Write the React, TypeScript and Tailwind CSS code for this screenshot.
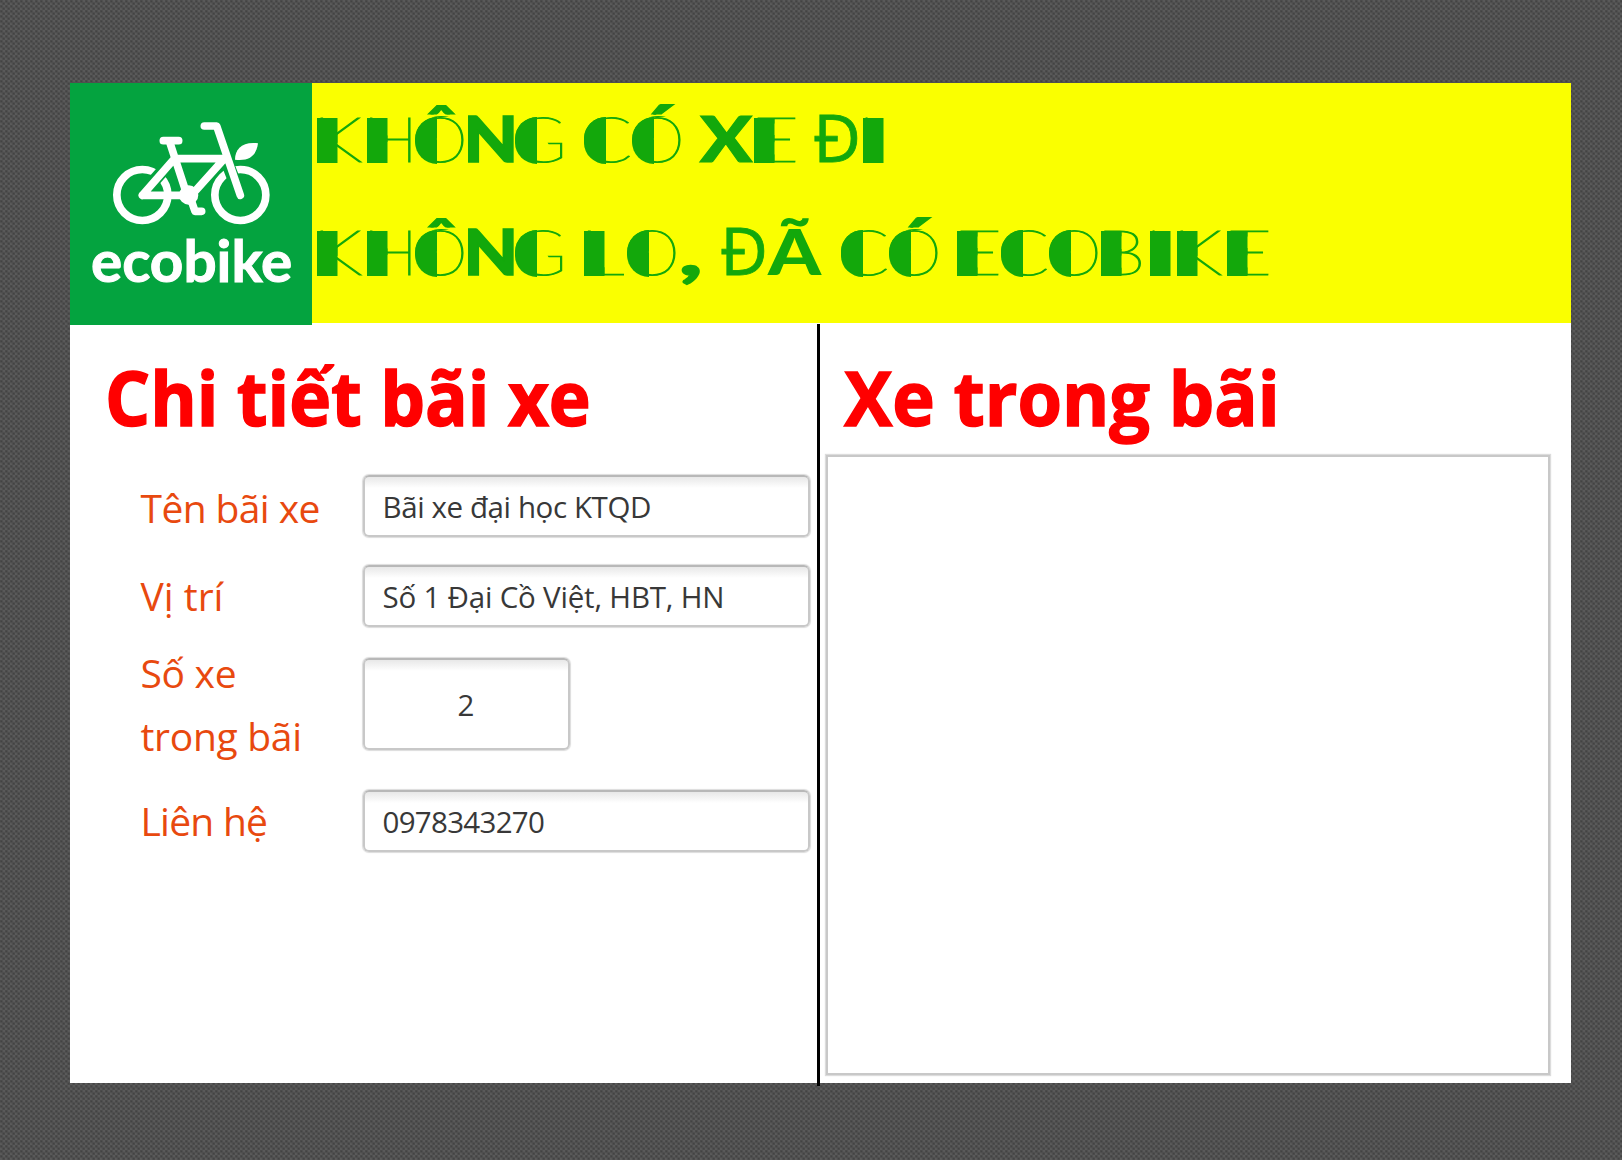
import React from "react";

const layer =
  "before:absolute before:left-0 before:top-0 before:h-[75px] before:font-black before:content-[attr(data-c)]";
const accent =
  " after:absolute after:left-0 after:top-[1px] after:h-[75px] after:w-full after:font-black after:content-[attr(data-c)] after:[clip-path:inset(-12px_0_60px_0)]";
const bar =
  layer +
  " indent-[-4px] origin-left scale-x-[var(--s)] [-webkit-text-stroke:1.2px_#13a80b] before:w-[calc(20.5px/var(--s))] before:[-webkit-text-stroke:34px_#13a80b] before:[clip-path:inset(17px_0_13px_0)]";
const half =
  layer +
  " indent-[-2px] origin-left scale-x-[var(--s)] [-webkit-text-stroke:1.2px_#13a80b] before:w-[calc(22px/var(--s))] before:[-webkit-text-stroke:36px_#13a80b] before:[clip-path:inset(16px_0_12px_0_round_20px_0_0_20px_/_23px_0_0_23px)]";

const styles: Record<string, string> = {
  K: "w-[50px] [--s:1.33] " + bar,
  H: "w-[48px] [--s:1.22] " + bar,
  E: "w-[44px] [--s:1.42] " + bar,
  L: "w-[43px] [--s:1.5] " + bar,
  B: "w-[49px] [--s:1.3] " + bar,
  I: "w-[27px] [--s:1] " + bar,
  O: "w-[52px] [--s:1.13] " + half,
  C: "w-[48px] [--s:1.2] " + half,
  G: "w-[50px] [--s:1.18] " + half,
  "Ô": "w-[52px] [--s:1.13] " + half + accent,
  "Ó": "w-[49px] [--s:1.13] " + half + accent,
  N: "w-[48px] font-black indent-[-3px] origin-left scale-x-[1.14] [-webkit-text-stroke:1.5px_#13a80b]",
  X: "w-[54px] font-black origin-left scale-x-[1.24] [-webkit-text-stroke:1px_#13a80b]",
  "Ã": "w-[54px] -ml-[2px] font-black origin-left scale-x-[1.22]",
  "Đ": "w-[50px] -ml-[4px] top-[-2px] font-['Open_Sans'] text-[66px] font-medium [-webkit-text-stroke:0.8px_#13a80b]",
  ",": "w-[26px] font-black origin-left scale-x-[1.6] [-webkit-text-stroke:1.5px_#13a80b]",
  " ": "w-[19px]",
};

function Slogan({ text }: { text: string }) {
  return (
    <div className="flex h-[75px] whitespace-pre text-[62px] leading-[75px] font-thin">
      {Array.from(text).map((c, i) => (
        <span key={i} data-c={c} className={"relative block h-[75px] shrink-0 " + styles[c]}>
          {c}
        </span>
      ))}
    </div>
  );
}

function Logo() {
  return (
    <svg viewBox="32 38 726 726" className="h-[242px] w-[242px] shrink-0 bg-[#04a33f]">
      <g fill="none" stroke="#fff" strokeWidth="23" strokeLinecap="round" strokeLinejoin="round">
        <circle cx="249" cy="374" r="76.5" />
        <circle cx="543" cy="374" r="76.5" />
        <path d="M285 330L345 262M498 262L530 345" stroke="#04a33f" strokeWidth="38" strokeLinecap="butt" />
        <path d="M249 375H388M249 375L345 265H495L396 375M331 215L380 365M312 211H358M435 167H472L543 375M395 388L407 423H427" />
      </g>
      <circle cx="388" cy="374" r="29" fill="#fff" />
      <path d="M527 268C527 236 549 213 596 219C591 256 570 273 527 268Z" fill="#fff" />
      <text x="95" y="634" textLength="604" lengthAdjust="spacingAndGlyphs" fill="#fff" stroke="#fff" strokeWidth="3" className="font-['Lato'] text-[172px] font-bold">
        ecobike
      </text>
    </svg>
  );
}

const field =
  "flex items-center rounded-[6px] border-2 border-[#c8c8c8] border-t-[#b8b8b8] shadow-[0_0_1px_1px_#dcdcdc] bg-linear-to-b from-[#e8e8e8] to-white to-[11px] pt-[2px] text-[29.5px] text-[#383838]";
const wide = " h-[62px] w-[447px] pl-[18px]";
const label = "w-[222px] shrink-0 text-[39px] text-[#e8490f]";

export default function App() {
  return (
    <div className="h-[1160px] w-[1622px] overflow-hidden bg-[#5a5a5a] bg-[radial-gradient(circle_at_25%_25%,#404040_0,transparent_45%),radial-gradient(circle_at_75%_75%,#404040_0,transparent_45%)] bg-[length:5px_5px] pt-[83px] pl-[70px] font-['Open_Sans','Noto_Sans',sans-serif]">
      <div className="flex h-[1000px] w-[1501px] flex-col bg-white">
        <header className="flex h-[240px] shrink-0 bg-[#faff00]">
          <Logo />
          <div className="flex flex-col gap-[38px] pt-[18px] pl-[5px] font-['Lato'] text-[#13a80b]">
            <Slogan text="KHÔNG CÓ XE ĐI" />
            <Slogan text="KHÔNG LO, ĐÃ CÓ ECOBIKE" />
          </div>
        </header>
        <div className="flex h-[763px] shrink-0 pt-px">
          <section className="flex w-[747px] flex-col pt-[18px]">
            <h1 className="h-[110px] w-fit origin-left scale-x-[0.945] pl-[37px] text-[75px] leading-[110px] font-bold whitespace-nowrap text-[#ff0000] [-webkit-text-stroke:1.5px_#ff0000]">
              Chi tiết bãi xe
            </h1>
            <div className="mt-[23px] flex h-[62px] items-center pl-[70.5px]">
              <div className={label + " pt-[4px] tracking-[-0.6px]"}>Tên bãi xe</div>
              <div className={field + wide + " tracking-[-0.4px]"}>Bãi xe đại học KTQD</div>
            </div>
            <div className="mt-[28px] flex h-[62px] items-center pl-[70.5px]">
              <div className={label}>Vị trí</div>
              <div className={field + wide + " tracking-[-0.2px]"}>Số 1 Đại Cồ Việt, HBT, HN</div>
            </div>
            <div className="mt-[16px] flex h-[122px] items-center pl-[70.5px]">
              <div className={label + " leading-[63px] tracking-[-0.3px]"}>
                Số xe
                <br />
                trong bãi
              </div>
              <div className={field + " h-[92px] w-[207px] justify-center"}>2</div>
            </div>
            <div className="mt-[25px] flex h-[62px] items-center pl-[70.5px]">
              <div className={label + " tracking-[-0.75px]"}>Liên hệ</div>
              <div className={field + wide + " tracking-[-0.7px]"}>0978343270</div>
            </div>
          </section>
          <div className="w-[2.5px] shrink-0 bg-black" />
          <section className="flex flex-1 flex-col pt-[18px] pr-[21px] pl-[6.5px]">
            <h1 className="h-[110px] w-fit origin-left scale-x-[0.96] pl-[19px] text-[75px] leading-[110px] font-bold whitespace-nowrap text-[#ff0000] [-webkit-text-stroke:1.5px_#ff0000]">
              Xe trong bãi
            </h1>
            <div className="mt-[3px] h-[620px] border-2 border-[#c8c8c8] shadow-[0_0_1px_1px_#dcdcdc]" />
          </section>
        </div>
      </div>
    </div>
  );
}
